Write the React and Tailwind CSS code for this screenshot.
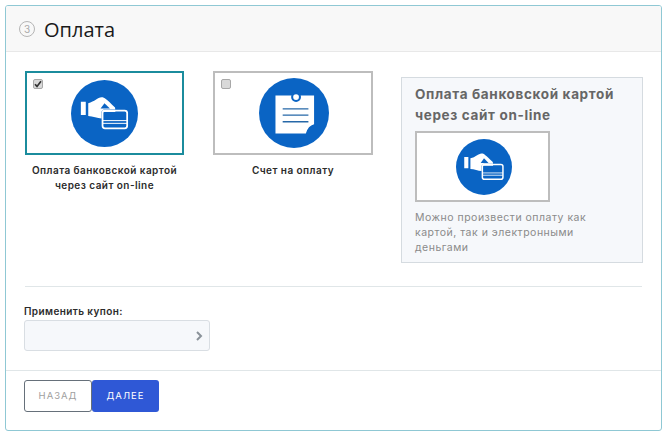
const font = { fontFamily: "Inter, 'Noto Sans', sans-serif" };

function CardIcon({ size }) {
  return (
    <svg width={size} height={size} viewBox="0 0 68 68" className="block">
      <circle cx="34" cy="34" r="34" fill="#0a64c4" />
      <path d="M10 22h5v13.500h-5z" fill="#fff" />
      <path
        d="M17.500 23.500C24 22 27 18 31 17.600c2.500-.2 4.500 1.400 13.700 10.400l.3 3H36v7.500l-5 .5c-4 0-9-2.500-13.500-2.500z"
        fill="#fff"
      />
      <path d="M34 23.500l5.500 5.500H30z" fill="#0a64c4" />
      <rect x="31" y="30" width="27" height="20" rx="3" fill="#0a64c4" />
      <rect x="32" y="31" width="25" height="18" rx="2.500" fill="none" stroke="#fff" strokeWidth="1.800" />
      <path d="M32 30.500h13v2H32z" fill="#fff" />
      <path d="M32 41.200h25M32 44h25" stroke="#fff" strokeWidth="1" />
    </svg>
  );
}

function NoteIcon({ size }) {
  return (
    <svg width={size} height={size} viewBox="0 0 68 68" className="block">
      <circle cx="34" cy="34" r="34" fill="#0a64c4" />
      <path d="M16 17h37.500v28c-4 1-6.500 4-8 9H16z" fill="#fff" />
      <circle cx="36" cy="18.500" r="3.800" fill="#fff" stroke="#0a64c4" strokeWidth="2" />
      <path d="M23 30h25M23 36h25M23 42.500h25" stroke="#2668a8" strokeWidth="1.300" />
    </svg>
  );
}

function Tick({ checked }) {
  return (
    <span className="absolute left-[6px] top-[6px] flex h-[10px] w-[10px] items-center justify-center rounded-[2px] border border-[#a8a8a8] bg-[#d9d9d9]">
      {checked && (
        <svg width="8" height="8" viewBox="0 0 8 8">
          <path d="M1 4.200l2 2.200L7 1.200" fill="none" stroke="#333" strokeWidth="1.700" />
        </svg>
      )}
    </span>
  );
}

function PayOption({ checked, active, label, icon, wide }) {
  return (
    <div className={wide ? "w-[160px] shrink-0" : "w-[159px] shrink-0"}>
      <div
        className={
          active
            ? "relative flex h-[84px] items-center justify-center border-2 border-[#1b8c9d] bg-white"
            : "relative flex h-[84px] items-center justify-center border-2 border-[#bdbdbd] bg-white"
        }
      >
        <Tick checked={checked} />
        {icon}
      </div>
      <p className="mt-[8px] text-center text-[10px] leading-[15px] font-semibold tracking-[0.45px] text-[#2b2b2b]">
        {label}
      </p>
    </div>
  );
}

export default function App() {
  return (
    <div className="min-h-[436px] bg-white pl-[5px] pr-[4px] pt-[5px] pb-[5px]" style={font}>
      <div className="h-[426px] overflow-hidden rounded-[3px] border border-[#8fc8d4] bg-white">
        <header className="flex h-[46px] items-center gap-[9px] border-b border-[#e8e8e8] bg-[#f8f8f8] pl-[13px]">
          <span className="flex h-[16px] w-[16px] items-center justify-center rounded-full border border-[#b5b5b5] text-[10px] leading-none text-[#aaa]">
            3
          </span>
          <h2
            className="pt-[2px] text-[20px] leading-none text-[#1a1a1a]"
            style={{ fontFamily: "'Open Sans', sans-serif" }}
          >
            Оплата
          </h2>
        </header>

        <div className="flex items-start pl-[19px] pt-[19px]">
          <PayOption
            checked
            active
            icon={<CardIcon size={67} />}
            label={
              <>
                Оплата банковской картой
                <br />
                через сайт on-line
              </>
            }
          />
          <div className="ml-[29px]">
            <PayOption
              wide
              icon={
                <span className="pl-[2px]">
                  <NoteIcon size={70} />
                </span>
              }
              label="Счет на оплату"
            />
          </div>
          <aside className="ml-[28px] mt-[6px] h-[186px] w-[242px] border border-[#d5dbe0] bg-[#f6f8fb] pl-[13px] pt-[6px]">
            <h3 className="text-[13.500px] leading-[21px] font-bold tracking-[0.65px] whitespace-nowrap text-[#666]">
              Оплата банковской картой
              <br />
              через сайт on-line
            </h3>
            <div className="mt-[5px] flex h-[71px] w-[135px] items-center justify-center border-[2px] border-[#bdbdbd] bg-white pl-[2px]">
              <CardIcon size={56} />
            </div>
            <p className="mt-[8px] text-[10.500px] leading-[15px] tracking-[0.5px] whitespace-nowrap text-[#8a8a8a]">
              Можно произвести оплату как
              <br />
              картой, так и электронными
              <br />
              деньгами
            </p>
          </aside>
        </div>

        <div className="mx-[19px] mt-[23px] border-t border-[#e0e6e8]" />

        <div className="px-[18px] pt-[18px]">
          <label className="block text-[10px] leading-[13px] font-semibold tracking-[0.4px] text-[#2b2b2b]">
            Применить купон:
          </label>
          <div className="mt-[2px] flex h-[31px] w-[186px] items-center justify-end rounded-[3px] border border-[#d9dee3] bg-[#f6f8fb] pr-[5px]">
            <svg width="10" height="12" viewBox="0 0 10 12">
              <path d="M3 2l4 4-4 4" fill="none" stroke="#8a9299" strokeWidth="2" />
            </svg>
          </div>
        </div>

        <div className="mt-[19px] border-t border-[#e0e6e8] px-[18px] pt-[9px]">
          <div className="flex">
            <button className="h-[32px] w-[68px] rounded-[3px] border border-[#66707a] bg-white text-[9.500px] tracking-[1px] text-[#a0a0a0]">
              НАЗАД
            </button>
            <button className="h-[32px] w-[67px] rounded-[3px] bg-[#2f58d6] text-[9.500px] tracking-[1px] text-white">
              ДАЛЕЕ
            </button>
          </div>
        </div>
      </div>
    </div>
  );
}
